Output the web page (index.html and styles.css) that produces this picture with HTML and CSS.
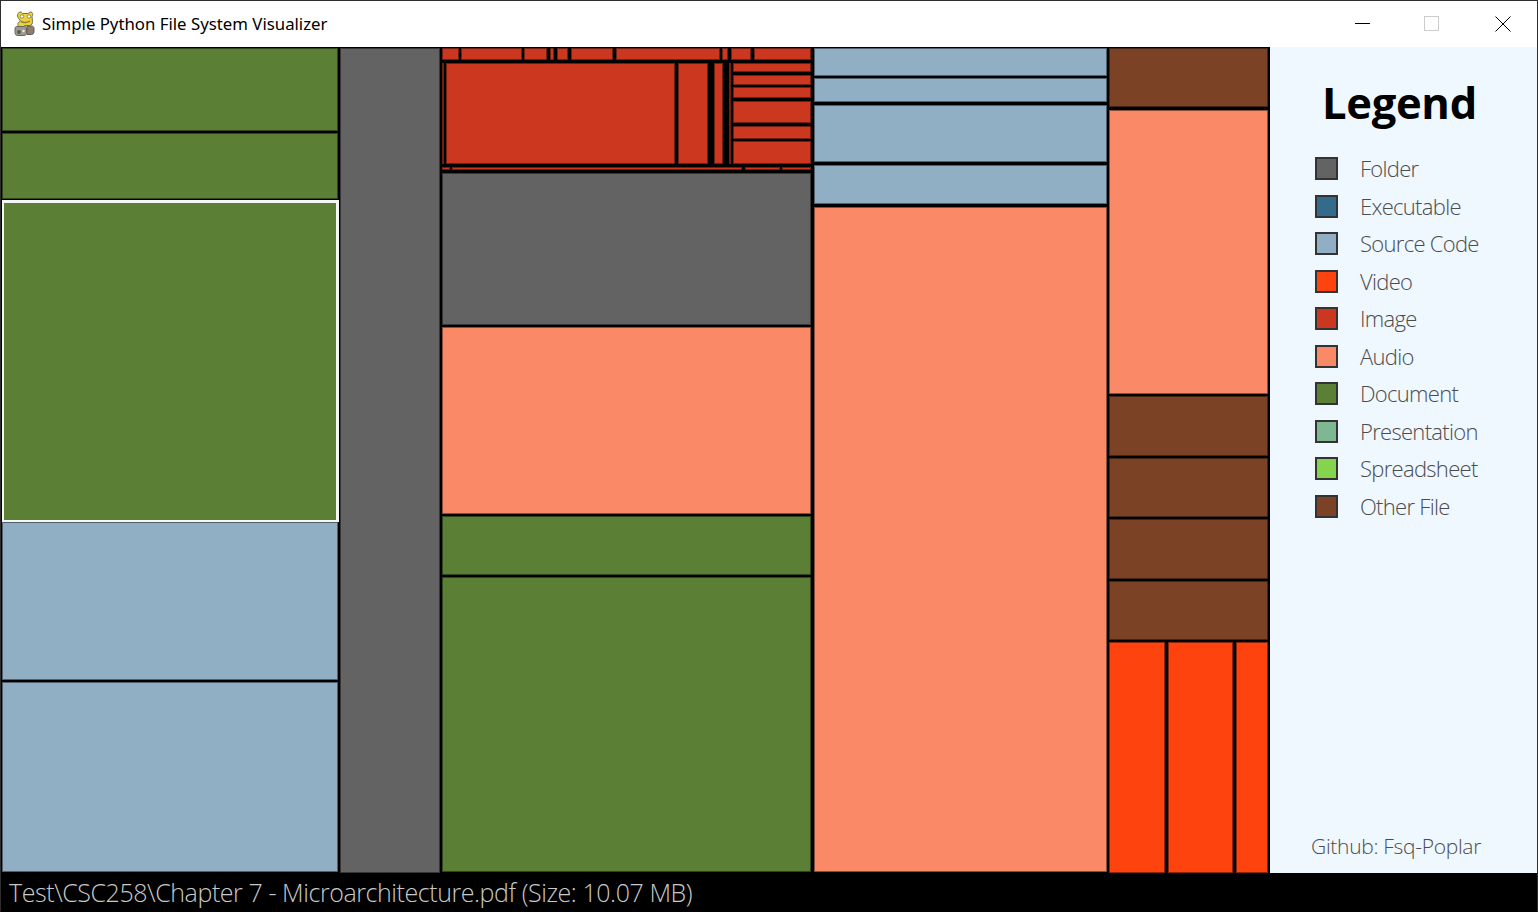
FILE: index.html
```html
<!DOCTYPE html>
<html lang="en">
<head>
<meta charset="utf-8">
<title>Simple Python File System Visualizer</title>
<link rel="stylesheet" href="styles.css">
</head>
<body>
<div class="window">
  <header class="titlebar">
    <svg class="app-icon" viewBox="0 0 24 26" width="24" height="26" aria-hidden="true">
      <path d="M5 1.500c1.500-1 3-.5 3.500 1h6c.5-1.500 2.500-2 3.500-1 1.200 1.200.8 3 0 4l.5 5c.3 2-.8 3.500-3 4h-5l-.5 1h-5c-1.500-1-1.500-3-.5-4l2-1.500-2.500-3.500C3 4.500 3.500 2.500 5 1.500z" fill="#ecd23c" stroke="#77724a" stroke-width="1"/>
      <circle cx="8" cy="5.500" r="1.700" fill="#fff" stroke="#55522f" stroke-width=".6"/>
      <circle cx="15" cy="5.500" r="1.700" fill="#fff" stroke="#55522f" stroke-width=".6"/>
      <path d="M7 10.500c2.500 1.200 6 1.200 9-.3" fill="none" stroke="#8d8238" stroke-width="1.400"/>
      <path d="M2.500 15.500h8c1.500 0 2 1 2 2.500v3.500c0 2-1 3-2.500 3h-6c-2 0-3-1-3-3V18c0-1.500.5-2.500 1.500-2.500z" fill="#9b9b93" stroke="#66665f" stroke-width="1"/>
      <circle cx="5" cy="21" r="2" fill="#5b5b55"/>
      <path d="M13 15h4.500c1.500 0 2.500 1 2.500 2.500v3c0 2-1 3-2.500 3H13z" fill="#8f7d70" stroke="#625a50" stroke-width="1"/>
      <circle cx="9.500" cy="20" r="1.200" fill="#e8e8e0"/>
    </svg>
    <span class="title-text">Simple Python File System Visualizer</span>
    <div class="win-controls">
      <svg class="win-btn" viewBox="0 0 16 16" width="16" height="16" aria-hidden="true"><path d="M0 7.500h15" stroke="#000" fill="none"/></svg>
      <svg class="win-btn win-max" viewBox="0 0 16 16" width="16" height="16" aria-hidden="true"><rect x=".5" y=".5" width="14" height="14" stroke="#cccccc" fill="none"/></svg>
      <svg class="win-btn" viewBox="0 0 16 16" width="16" height="16" aria-hidden="true"><path d="M.5.500l15 15M15.500.500l-15 15" stroke="#000" fill="none"/></svg>
    </div>
  </header>

  <main class="main">
    <section class="map">
      <div class="col" style="width:336px">
        <div class="tile doc" style="height:83px"></div>
        <div class="tile doc" style="height:66px;margin-top:2px"></div>
        <div class="tile doc selected" style="height:322px;margin-top:1px"></div>
        <div class="tile src" style="height:158px"></div>
        <div class="tile src" style="height:190px;margin-top:2px"></div>
      </div>

      <div class="col" style="width:100px">
        <div class="tile dir" style="height:825px"></div>
      </div>

      <div class="col col-wide" style="width:369px">
        <div class="row" style="height:12px">
          <div class="tile img" style="width:17px"></div>
          <div class="tile img" style="width:61px;margin-left:2px"></div>
          <div class="tile img" style="width:23px;margin-left:2px"></div>
          <div class="tile img" style="width:4px;margin-left:3px"></div>
          <div class="tile img" style="width:11px;margin-left:3px"></div>
          <div class="tile img" style="width:42px;margin-left:3px"></div>
          <div class="tile img" style="width:104px;margin-left:3px"></div>
          <div class="tile img" style="width:6px;margin-left:2px"></div>
          <div class="tile img" style="width:20px;margin-left:3px"></div>
          <div class="tile img" style="width:57px;margin-left:3px"></div>
        </div>
        <div class="row" style="height:101px;margin-top:3px">
          <div class="tile img" style="width:2px"></div>
          <div class="tile img" style="width:229px;margin-left:2px"></div>
          <div class="tile img" style="width:30px;margin-left:3px"></div>
          <div class="tile img" style="width:9px;margin-left:6px"></div>
          <div class="tile img" style="width:2px;margin-left:6px"></div>
          <div class="stack" style="width:78px;margin-left:2px">
            <div class="tile img" style="height:9px"></div>
            <div class="tile img" style="height:10px;margin-top:3px"></div>
            <div class="tile img" style="height:11px;margin-top:2px"></div>
            <div class="tile img" style="height:22px;margin-top:3px"></div>
            <div class="tile img" style="height:13px;margin-top:3px"></div>
            <div class="tile img" style="height:23px;margin-top:2px"></div>
          </div>
        </div>
        <div class="row" style="height:3px;margin-top:3px">
          <div class="tile img" style="width:8px"></div>
          <div class="tile img" style="width:290px;margin-left:2px"></div>
          <div class="tile img" style="width:35px;margin-left:3px"></div>
          <div class="tile img" style="width:29px;margin-left:2px"></div>
        </div>
        <div class="tile dir" style="height:152px;margin-top:3px"></div>
        <div class="tile aud" style="height:187px;margin-top:2px"></div>
        <div class="tile doc" style="height:59px;margin-top:2px"></div>
        <div class="tile doc" style="height:295px;margin-top:2px"></div>
      </div>

      <div class="col" style="width:293px">
        <div class="tile src" style="height:28px"></div>
        <div class="tile src" style="height:24px;margin-top:2px"></div>
        <div class="tile src" style="height:57px;margin-top:3px"></div>
        <div class="tile src" style="height:39px;margin-top:3px"></div>
        <div class="tile aud" style="height:665px;margin-top:3px"></div>
      </div>

      <div class="col" style="width:159px">
        <div class="tile oth" style="height:59px"></div>
        <div class="tile aud" style="height:284px;margin-top:3px"></div>
        <div class="tile oth" style="height:60px;margin-top:2px"></div>
        <div class="tile oth" style="height:59px;margin-top:2px"></div>
        <div class="tile oth" style="height:60px;margin-top:2px"></div>
        <div class="tile oth" style="height:59px;margin-top:2px"></div>
        <div class="row" style="height:231px;margin-top:2px">
          <div class="tile vid" style="width:56px"></div>
          <div class="tile vid" style="width:65px;margin-left:3px"></div>
          <div class="tile vid" style="width:32px;margin-left:3px"></div>
        </div>
      </div>
    </section>

    <aside class="legend">
      <h1 class="legend-title">Legend</h1>
      <ul class="legend-list">
        <li class="legend-item"><span class="swatch dir"></span>Folder</li>
        <li class="legend-item"><span class="swatch exe"></span>Executable</li>
        <li class="legend-item"><span class="swatch src"></span>Source Code</li>
        <li class="legend-item"><span class="swatch vid"></span>Video</li>
        <li class="legend-item"><span class="swatch img"></span>Image</li>
        <li class="legend-item"><span class="swatch aud"></span>Audio</li>
        <li class="legend-item"><span class="swatch doc"></span>Document</li>
        <li class="legend-item"><span class="swatch pre"></span>Presentation</li>
        <li class="legend-item"><span class="swatch xls"></span>Spreadsheet</li>
        <li class="legend-item"><span class="swatch oth"></span>Other File</li>
      </ul>
      <p class="credit">Github: Fsq-Poplar</p>
    </aside>
  </main>

  <footer class="status">Test\CSC258\Chapter 7 - Microarchitecture.pdf (Size: 10.07 MB)</footer>
</div>
</body>
</html>
```

FILE: styles.css
```css
* { box-sizing: border-box; }

html, body {
  margin: 0;
  padding: 0;
  background: #000;
}

.window {
  width: 1538px;
  height: 912px;
  display: flex;
  flex-direction: column;
  border: 1px solid #2e2e2e;
  border-bottom-color: #000;
  overflow: hidden;
  font-family: "Open Sans", "Noto Sans", sans-serif;
}

.titlebar {
  height: 46px;
  flex: none;
  display: flex;
  align-items: center;
  background: #fff;
  padding-left: 13px;
}

.app-icon { flex: none; margin-right: 4px; }

.title-text {
  font-family: "Noto Sans", sans-serif;
  font-size: 16.8px;
  color: #000;
  padding-bottom: 1px;
}

.win-controls {
  margin-left: auto;
  margin-right: 26px;
  display: flex;
  gap: 54px;
  align-items: center;
}

.win-btn { display: block; }
.win-max { margin: 0 1px 0 -1px; }

.main {
  flex: 1;
  min-height: 0;
  display: flex;
}

.map {
  width: 1269px;
  flex: none;
  display: flex;
  gap: 2px;
  padding: 1px 0 0 1px;
  background: #000;
}

.col { display: flex; flex-direction: column; flex: none; }
.col-wide { margin-right: 1px; }
.row { display: flex; flex: none; }
.stack { display: flex; flex-direction: column; flex: none; }

.tile {
  flex: none;
  box-shadow: inset 0 0 0 1px rgba(0, 0, 0, 0.45);
}

.tile.selected {
  border-style: solid;
  border-color: #f6f6f6;
  border-width: 3px 3px 2px 2px;
  box-shadow: none;
  margin-right: -1px;
}

.dir { background: #636363; }
.exe { background: #336b8c; }
.src { background: #90aec4; }
.vid { background: #ff430e; }
.img { background: #cb381f; }
.aud { background: #fa8a67; }
.doc { background: #5a7f35; }
.pre { background: #7eb893; }
.xls { background: #85d44e; }
.oth { background: #7c4226; }

.legend {
  flex: 1;
  display: flex;
  flex-direction: column;
  background: #eff7ff;
  padding-left: 45px;
  color: #4c4c4c;
}

.legend-title {
  margin: 28px 0 0 7px;
  font-family: "Open Sans", sans-serif;
  font-size: 43.5px;
  line-height: 56px;
  font-weight: 700;
  color: #000;
  letter-spacing: -0.3px;
}

.legend-list {
  list-style: none;
  margin: 19px 0 0;
  padding: 0;
}

.legend-item {
  height: 37.5px;
  display: flex;
  align-items: center;
  padding-bottom: 1px;
  font-size: 22px;
  font-weight: 300;
  letter-spacing: -0.7px;
}

.swatch {
  width: 23px;
  height: 23px;
  flex: none;
  margin: 1px 22px 0 0;
  border: 2px solid #333;
}

.credit {
  margin: auto 0 11px -4px;
  font-size: 21px;
  line-height: 32px;
  font-weight: 300;
  letter-spacing: -0.3px;
}

.status {
  height: 38px;
  flex: none;
  padding-left: 8px;
  background: #000;
  color: #c8c8c8;
  font-size: 25px;
  line-height: 38px;
  font-weight: 300;
  letter-spacing: -0.43px;
  white-space: nowrap;
}
```
